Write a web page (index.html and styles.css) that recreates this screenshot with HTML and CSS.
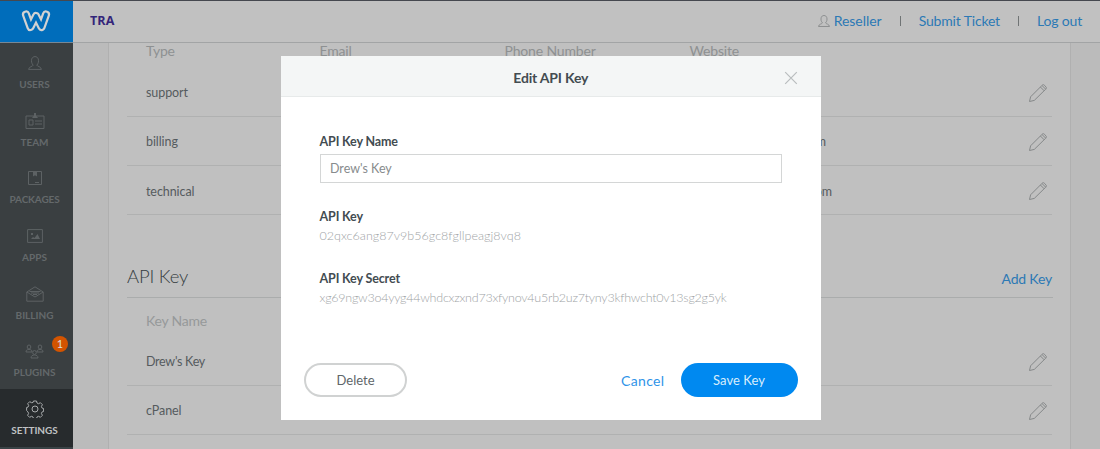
FILE: index.html
```
<!DOCTYPE html>
<html lang="en">
<head>
<meta charset="utf-8">
<title>Settings</title>
<link rel="stylesheet" href="styles.css">
</head>
<body>
<svg class="defs" width="0" height="0">
  <symbol id="user" viewBox="0 0 14 14"><path d="M5.2 9.2C3.5 7.5 3.2 5 3.7 3.1 4.1 1.5 5.4.6 7 .6s2.900.9 3.300 2.500c.5 1.900.2 4.400-1.500 6.100.2 1.200 4.300 1.200 4.600 4.200H.6c.3-3 4.400-3 4.600-4.200z"/></symbol>
  <symbol id="pencil" viewBox="0 0 20 20"><path d="M1.500 18.500l1.100-4.700L14 2.400c.8-.8 1.500-1 2.200-.3l1.800 1.800c.6.7.5 1.400-.2 2.200L6.300 17.400zM12.400 4l3.800 3.800M14 2.500l3.700 3.700"/></symbol>
</svg>
<div class="app">
  <aside class="sidebar">
    <div class="logo">
      <svg width="30" height="24" viewBox="0 0 30 24"><path class="logo-out" d="M5 5.500l4.500 12.500L15 7l5.500 11L25 5.500"/><path class="logo-in" d="M5 5.500l4.500 12.500L15 7l5.500 11L25 5.500"/></svg>
    </div>
    <nav class="nav">
      <a class="item"><svg class="icon" width="14" height="14"><use href="#user"/></svg><span>USERS</span></a>
      <a class="item"><svg class="icon" width="20" height="18" viewBox="0 0 20 18"><path d="M1 4h18v12.500H1zM4 8h4v5H4zM10 9h7M10 12h7"/><path class="fill" d="M9 1h2v2.500l2 2.500H7l2-2.500z"/></svg><span>TEAM</span></a>
      <a class="item"><svg class="icon" width="16" height="16" viewBox="0 0 16 16"><path d="M1.500 1.500h13v13h-13zM8 12.500h4"/><path class="fill" d="M6 1.500h4v5L8 5.300 6 6.500z"/></svg><span>PACKAGES</span></a>
      <a class="item"><svg class="icon" width="16" height="14" viewBox="0 0 16 14"><path d="M.6.6h14.800v12.800H.6z"/><path class="fill" d="M4 10l2-2 1.500 1 3-4L13 10zM4 4h2v2H4z"/></svg><span>APPS</span></a>
      <a class="item"><svg class="icon" width="18" height="16" viewBox="0 0 18 16"><path d="M.8 6L9 .8 17.200 6v9.200H.8zM.8 6L9 11l8.200-5M3.500 5.500h11M5 7h8M7 8.500h4"/></svg><span>BILLING</span></a>
      <a class="item"><svg class="icon" width="19" height="16" viewBox="0 0 19 16"><path d="M2.200 4a1.800 2 0 1 1 3.600 0 1.800 2 0 1 1-3.600 0M1 9c0-2 1-2.500 3-2.500S7 7 7 9zM13.200 4a1.800 2 0 1 1 3.600 0 1.800 2 0 1 1-3.600 0M12 9c0-2 1-2.500 3-2.500s3 .5 3 2.500zM7.700 9.500a1.800 2 0 1 1 3.600 0 1.800 2 0 1 1-3.600 0M6 15c0-2.200 1.500-3 3.500-3s3.500.8 3.500 3z"/></svg><span>PLUGINS</span><b class="badge">1</b></a>
      <a class="item active"><svg class="icon" width="18" height="18" viewBox="0 0 18 18"><circle cx="9" cy="9" r="3"/><path d="M7.500 1h3l.5 2 1.500.7 1.900-1 2 2-1 1.900.7 1.500 1.500.4v3l-1.500.4-.7 1.500 1 1.900-2 2-1.900-1-1.500.7-.5 1.500h-3L7 17l-1.500-.7-1.900 1-2-2 1-1.900-.7-1.500L.6 10.500v-3L2 7.100l.7-1.500-1-1.900 2-2 1.900 1L7 2.500z"/></svg><span>SETTINGS</span></a>
      <div class="rest"></div>
    </nav>
  </aside>
  <div class="main">
    <header class="topbar">
      <strong class="brand">TRA</strong>
      <div class="links">
        <svg class="icon" width="12" height="12"><use href="#user"/></svg>
        <a class="reseller">Reseller</a><i></i><a class="ticket">Submit Ticket</a><i></i><a>Log out</a>
      </div>
    </header>
    <main class="page">
      <section class="card">
        <div class="row head"><span>Type</span><span>Email</span><span>Phone Number</span><span>Website</span></div>
        <div class="row line"><span>support</span><svg class="icon pencil"><use href="#pencil"/></svg></div>
        <div class="row line"><span>billing</span><span class="tail">m</span><svg class="icon pencil"><use href="#pencil"/></svg></div>
        <div class="row line"><span>technical</span><span class="tail tail-wide">om</span><svg class="icon pencil"><use href="#pencil"/></svg></div>
        <div class="section"><h2>API Key</h2><a>Add Key</a></div>
        <div class="row keyhead"><span>Key Name</span></div>
        <div class="row line"><span class="tight">Drew's Key</span><svg class="icon pencil"><use href="#pencil"/></svg></div>
        <div class="row line"><span>cPanel</span><svg class="icon pencil"><use href="#pencil"/></svg></div>
      </section>
    </main>
  </div>
</div>
<div class="modal">
  <div class="modal-head"><h3>Edit API Key</h3><svg class="close" width="14" height="14" viewBox="0 0 14 14"><path d="M1.200 1.200l11.600 11.600M12.800 1.200L1.200 12.800"/></svg></div>
  <div class="modal-body">
    <label>API Key Name</label>
    <div class="input">Drew's Key</div>
    <label>API Key</label>
    <p class="value">02qxc6ang87v9b56gc8fgllpeagj8vq8</p>
    <label>API Key Secret</label>
    <p class="value secret">xg69ngw3o4yyg44whdcxzxnd73xfynov4u5rb2uz7tyny3kfhwcht0v13sg2g5yk</p>
  </div>
  <div class="modal-foot"><button class="delete">Delete</button><a class="cancel">Cancel</a><button class="save">Save Key</button></div>
</div>
</body>
</html>
```
FILE: styles.css
```
* { box-sizing: border-box; }
body { margin: 0; height: 449px; overflow: hidden; font-family: Lato, sans-serif; background: #bbb; color: #555b5e; white-space: nowrap; }
h2, h3, p { margin: 0; }
.defs { position: absolute; }
.icon { fill: none; stroke: currentColor; stroke-width: 1; flex: none; }
.fill { fill: currentColor; stroke: none; }
.app { display: flex; height: 449px; border-top: 1px solid #45484f; }

.sidebar { width: 73px; flex: none; background: #3a3f41; color: #64696b; }
.sidebar .icon { opacity: .85; }
.logo { height: 42px; display: flex; align-items: center; justify-content: center; padding-right: 2px; padding-bottom: 1px; background: #006dbb; border-bottom: 1px solid #778896; }
.logo svg { fill: none; stroke-linecap: round; stroke-linejoin: round; overflow: visible; }
.logo-out { stroke: #d2d2d2; stroke-width: 8.200; }
.logo-in { stroke: #006dbb; stroke-width: 3.800; }
.nav { display: grid; grid-template-rows: repeat(7, 57.670px) 4px; padding-top: .5px; }
.item { position: relative; display: grid; grid-template-rows: 20px 14px; row-gap: 4px; justify-items: center; align-items: center; align-content: start; padding: 9.500px 4px 0 0; font-weight: 700; font-size: 10px; line-height: 14px; }
.item:nth-child(3) span { letter-spacing: -.14px; }
.active { background: #272b2d; color: #bfc2c3; }
.rest { background: #3a4346; }
.badge { position: absolute; left: 52px; top: 4.500px; width: 16px; height: 16px; border-radius: 50%; background: #d35400; color: #ddd; font: 400 11px/16px Lato, sans-serif; text-align: center; }

.main { flex: 1; display: flex; flex-direction: column; }
.topbar { height: 42px; flex: none; display: flex; align-items: center; justify-content: space-between; padding: 0 18px 2px 17px; background: #c1c1c1; border-bottom: 1px solid #a2a4a5; }
.brand { font: 700 12.500px "Open Sans", sans-serif; letter-spacing: .1px; color: #33257a; }
.links { display: flex; align-items: center; font-size: 14px; letter-spacing: -.17px; color: #2c79b5; }
.links .icon { color: #858889; margin-right: 4px; margin-left: -2px; }
.links .reseller { letter-spacing: -.03px; }
.links i { width: 1px; height: 10px; background: #707475; margin: 0 18px; }
.page { flex: 1; min-height: 0; padding: 0 29px 0 35px; }
.card { height: 100%; padding: 0 18px; background: #c0c0c0; border: solid #b0b0b0; border-width: 0 1px; }
.row { display: flex; align-items: center; height: 49.330px; padding: 2px 4px 0 19px; font-size: 12.500px; letter-spacing: -.08px; }
.line { border-bottom: 1px solid #b0b1b1; }
.head { display: grid; grid-template-columns: 173.500px 185px 185px 1fr; height: 24.500px; padding-top: 0; padding-bottom: 8px; font-size: 14px; line-height: 16px; letter-spacing: -.17px; color: #8e9192; }
.row .pencil { width: 20px; height: 20px; margin-left: auto; color: #858889; }
.row:has(.tail) { display: grid; grid-template-columns: 500px auto 1fr; justify-items: start; }
.tail { width: 180px; text-align: right; }
.tail-wide { width: 186px; }
.section { display: flex; align-items: center; justify-content: space-between; height: 82.500px; padding-top: 40px; margin-right: -1px; padding-right: 1px; border-bottom: 1px solid #aaacac; }
.section h2 { font-size: 18.500px; font-weight: 300; letter-spacing: -.2px; color: #343c3f; }
.section a { font-size: 14px; letter-spacing: -.18px; color: #2c79b5; padding-top: 5px; }
.keyhead { height: 38.500px; padding-top: 7px; font-size: 14px; letter-spacing: -.22px; color: #96999a; }
.tight { letter-spacing: -.28px; }

.modal { position: absolute; left: 281px; top: 56px; width: 539.500px; height: 363.500px; background: #fff; color: #434c51; }
.modal-head { display: grid; grid-template-columns: 1fr auto 1fr; align-items: center; height: 41px; padding-top: 3px; background: #f4f6f6; border-bottom: 1px solid #e7eaea; }
.modal-head h3 { grid-column: 2; font-size: 14px; letter-spacing: -.18px; }
.close { stroke: #b9bdbe; stroke-width: 1.200; fill: none; justify-self: end; margin-right: 22.500px; }
.modal-body { height: 266px; padding: 36px 38.500px 0; }
.modal label { display: block; font-size: 12.500px; font-weight: 700; line-height: 18px; letter-spacing: -.14px; }
.input { height: 29px; margin: 3px 0 24.500px; padding-left: 9.500px; border: 1px solid #d4d6d6; font-size: 12.500px; line-height: 27px; color: #878b8d; }
.value { font-size: 12.500px; font-weight: 300; line-height: 18px; letter-spacing: .03px; margin: 1.500px 0 24.500px; color: #a0a4a6; }
.modal .secret { margin-top: 1px; letter-spacing: -.237px; }
.modal-foot { display: flex; align-items: center; padding: 0 23px; }
.modal button { height: 34px; padding: 0; border-radius: 17px; font: 13px Lato, sans-serif; }
.delete { width: 103px; border: 2px solid #d0d2d2; background: #fff; color: #606669; }
.cancel { margin-left: auto; margin-right: 16px; font-size: 14px; letter-spacing: .35px; color: #2f94e8; }
.modal .save { width: 117px; border: 0; background: #0089f0; color: #d9edfc; letter-spacing: .06px; }
```
